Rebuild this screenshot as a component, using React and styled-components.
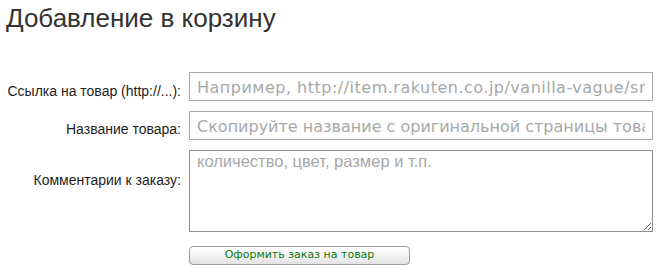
import React from 'react';
import styled, { createGlobalStyle } from 'styled-components';

const GlobalStyle = createGlobalStyle`
  body {
    margin: 0;
    background: #fff;
    font-family: 'Liberation Sans', Arial, sans-serif;
  }
`;

const Page = styled.div`
  padding: 3px 0 0 6px;
  width: 653px;
`;

const Title = styled.h1`
  margin: 0;
  font-family: 'Liberation Sans', Arial, sans-serif;
  font-weight: normal;
  font-size: 26px;
  line-height: 30px;
  color: #333;
`;

const Form = styled.form`
  display: grid;
  grid-template-columns: 175px 464px;
  column-gap: 8px;
  row-gap: 10px;
  margin-top: 39px;
`;

const Label = styled.label`
  text-align: right;
  font-size: 14px;
  line-height: 16px;
  color: #1e1e1e;
  padding-top: ${p => p.$top}px;
  white-space: nowrap;
`;

const TextInput = styled.input`
  box-sizing: border-box;
  width: 464px;
  height: 29px;
  margin: 0;
  padding: 1px 7px 0;
  border: 1px solid #a9a9a9;
  border-radius: 0;
  outline: none;
  font-family: 'DejaVu Sans', Verdana, sans-serif;
  font-size: 16px;
  letter-spacing: ${p => p.$spacing || 0}px;
  color: #333;
  &::placeholder {
    color: #a8a8a8;
  }
`;

const TextArea = styled.textarea`
  box-sizing: border-box;
  width: 464px;
  height: 82px;
  margin: 0;
  padding: 1px 7px;
  border: 1px solid #8e8e8e;
  outline: none;
  font-family: 'Liberation Sans', Arial, sans-serif;
  font-size: 16.5px;
  line-height: 19px;
  &::placeholder {
    color: #a8a8a8;
  }
`;

const Actions = styled.div`
  grid-column: 2;
  padding-top: 2px;
`;

const SubmitButton = styled.button`
  box-sizing: border-box;
  width: 221px;
  height: 19px;
  padding: 0;
  border: 1px solid #9c9c9c;
  border-radius: 4px;
  background: linear-gradient(#ffffff, #f3f3f3 50%, #e2e2e2);
  font-family: 'DejaVu Sans', Verdana, sans-serif;
  font-size: 11px;
  line-height: 16px;
  color: #0f7a0f;
  cursor: pointer;
`;

export default function App() {
  return (
    <Page>
      <GlobalStyle />
      <Title>Добавление в корзину</Title>
      <Form onSubmit={e => e.preventDefault()}>
        <Label $top={11}>Ссылка на товар (http://...):</Label>
        <TextInput
          $spacing={0.5}
          placeholder="Например, http://item.rakuten.co.jp/vanilla-vague/small-bag/"
        />
        <Label $top={10}>Название товара:</Label>
        <TextInput placeholder="Скопируйте название с оригинальной страницы товара" />
        <Label $top={22}>Комментарии к заказу:</Label>
        <TextArea placeholder="количество, цвет, размер и т.п." />
        <Actions>
          <SubmitButton type="submit">Оформить заказ на товар</SubmitButton>
        </Actions>
      </Form>
    </Page>
  );
}
